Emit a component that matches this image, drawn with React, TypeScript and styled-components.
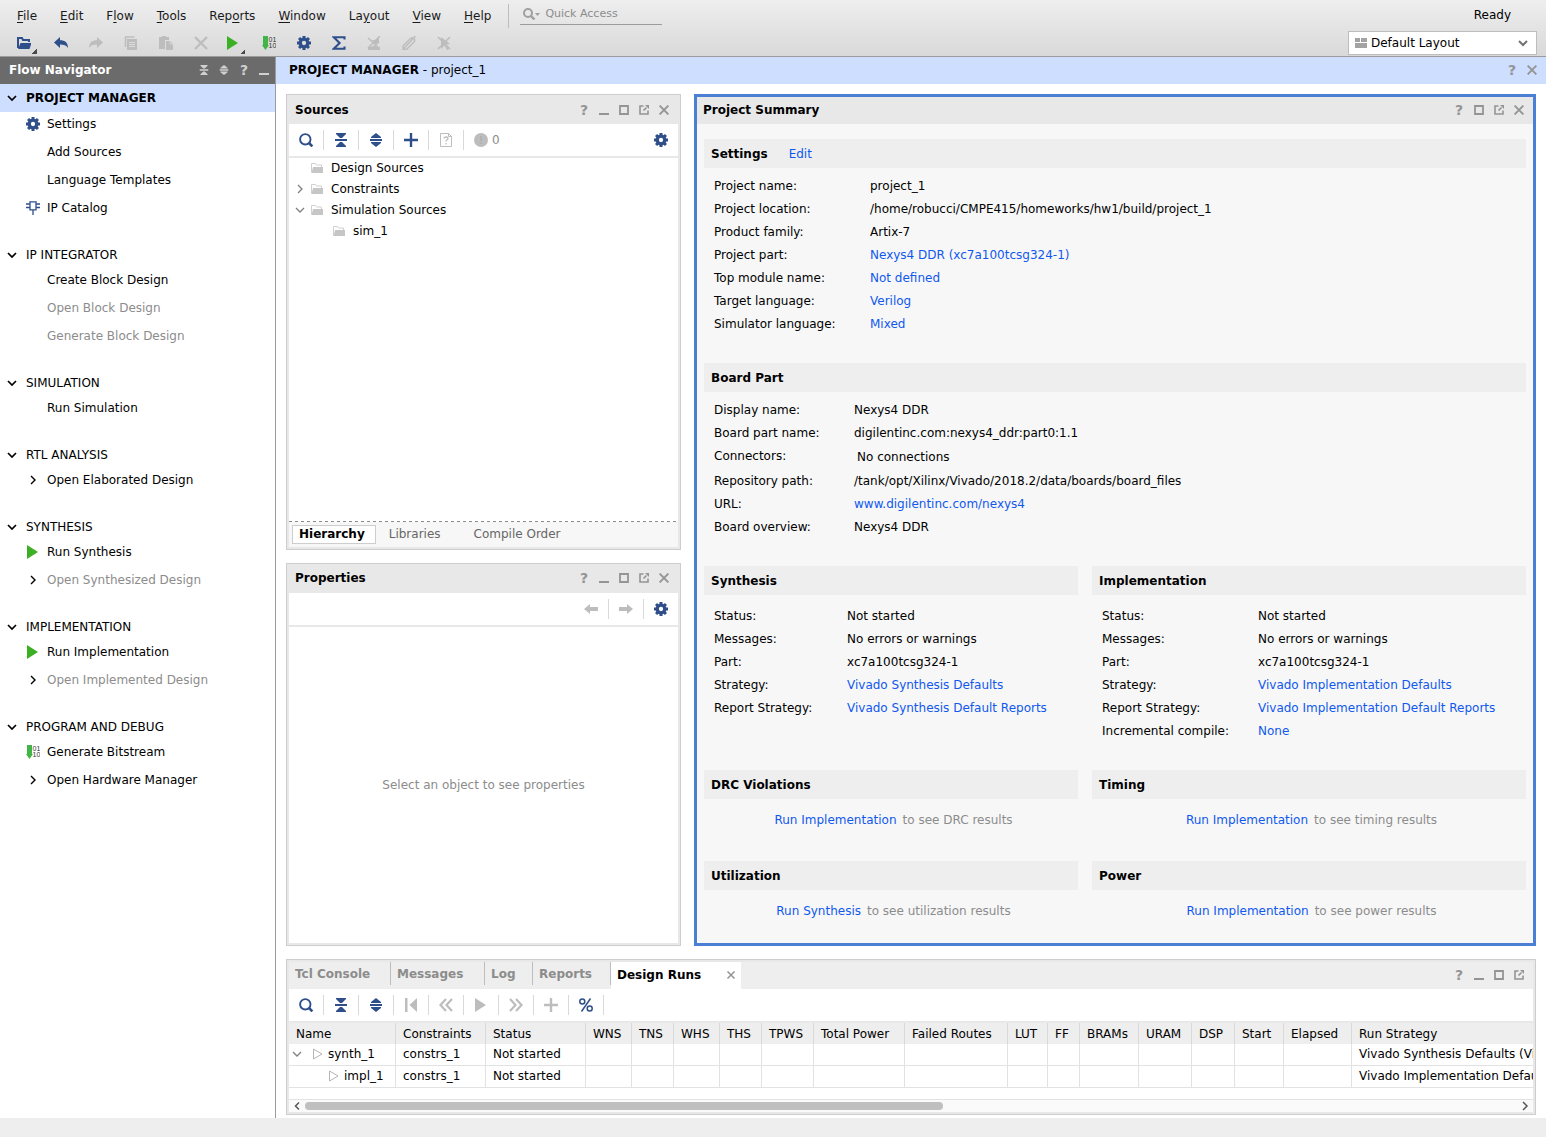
import React from "react";
import styled, { createGlobalStyle, css } from "styled-components";

const navy = "#2f4f8a";
const dim = "#bdbdbd";
const grey = "#949494";
const green = "#3bb024";

const GlobalStyle = createGlobalStyle`
  * { box-sizing: border-box; }
  body {
    margin: 0;
    background: #fff;
    color: #000;
    font-family: "DejaVu Sans", Verdana, sans-serif;
    font-size: 12px;
    line-height: 16px;
  }
  button, input, select {
    font: inherit;
    color: inherit;
    margin: 0;
    padding: 0;
    border: 0;
    border-radius: 0;
    background: none;
  }
  h1, h2, h3, p, ul, dl, dd, dt { margin: 0; padding: 0; font: inherit; }
  ul { list-style: none; }
  svg { display: block; flex: none; }
`;

/* ---------- icons ---------- */

type IconProps = { color?: string; size?: number };

const Svg = ({ size = 14, box = 14, children }: { size?: number; box?: number; children: React.ReactNode }) => (
  <svg width={size} height={size} viewBox={`0 0 ${box} ${box}`} fill="none" aria-hidden="true">
    {children}
  </svg>
);

const GearIcon = ({ color = navy }: IconProps) => (
  <Svg>
    {[0, 45, 90, 135, 180, 225, 270, 315].map((a) => (
      <rect key={a} x="5.5" y="0" width="3" height="3" fill={color} transform={`rotate(${a} 7 7)`} />
    ))}
    <circle cx="7" cy="7" r="3.8" stroke={color} strokeWidth="3.3" />
  </Svg>
);

const SearchIcon = ({ color = navy }: IconProps) => (
  <Svg>
    <circle cx="6.3" cy="6.3" r="5.2" stroke={color} strokeWidth="1.9" />
    <path d="M10 10l3.4 3.4" stroke={color} strokeWidth="2.6" />
  </Svg>
);

const CollapseIcon = ({ color = navy, size }: IconProps) => (
  <Svg size={size}>
    <path d="M2 0h10v1L8 5H6L2 1zM1 6h12v2H1zM6 9h2l4 4v1H2v-1z" fill={color} />
  </Svg>
);

const ExpandIcon = ({ color = navy, size }: IconProps) => (
  <Svg size={size}>
    <path d="M7 0l5 4v1H2V4zM1 6h12v2H1zM2 9h10v1l-5 4-5-4z" fill={color} />
  </Svg>
);

const PlusIcon = ({ color = navy }: IconProps) => (
  <Svg>
    <path d="M7 0v14M0 7h14" stroke={color} strokeWidth="2.4" />
  </Svg>
);

const UnknownFileIcon = () => (
  <Svg>
    <path d="M1.5.5h8l3 3v10h-11z" stroke={dim} />
    <path d="M9.500.5v3h3" stroke={dim} />
    <path d="M5 5.500c0-2 4-2 4 0 0 1.300-2 1.200-2 3M7 10v1.500" stroke={dim} strokeWidth="1.300" />
  </Svg>
);

const AlertIcon = () => (
  <Svg>
    <circle cx="7" cy="7" r="7" fill={dim} />
    <path d="M7 3v5M7 9.500v1.500" stroke="#b0b0b0" strokeWidth="1.600" />
  </Svg>
);

const FolderIcon = () => (
  <Svg size={12} box={12}>
    <path d="M.5 10.500V1.500h4l1 1.500h5v2" stroke="#d0d0d0" />
    <path d="M2 5h10v6H.500z" fill="#c6c6c6" />
  </Svg>
);

const OpenIcon = () => (
  <Svg>
    <path d="M1 12V2h4l1 2h6v2" stroke={navy} strokeWidth="2" />
    <path d="M3.500 7H14.500L12.500 13H1z" fill={navy} />
  </Svg>
);

const UndoIcon = ({ color = navy, flip }: IconProps & { flip?: boolean }) => (
  <Svg>
    <path
      d="M6 1v3.200c5 0 8 2.300 8 7.800-1.800-2.800-4-3.600-8-3.600V12L0 6.500z"
      fill={color}
      transform={flip ? "matrix(-1 0 0 1 14 0)" : undefined}
    />
  </Svg>
);

const CopyIcon = () => (
  <Svg>
    <path d="M1.500 11V1h9" stroke={dim} strokeWidth="1.500" />
    <path d="M3 3h10v11H3z" fill={dim} />
    <path d="M5 6.500h6M5 8.500h6M5 10.500h6" stroke="#dcdcdc" />
  </Svg>
);

const PasteIcon = () => (
  <Svg>
    <path d="M0 1h3V0h4v1h3v3H6v9H0z" fill={dim} />
    <path d="M7 5h4l3 3v6H7z" fill={dim} />
    <path d="M11 5v3h3" stroke="#dcdcdc" strokeWidth=".8" />
  </Svg>
);

const DeleteIcon = () => (
  <Svg>
    <path d="M1 1l12 12M13 1L1 13" stroke={dim} strokeWidth="2.300" />
  </Svg>
);

const PlayIcon = ({ color = green }: IconProps) => (
  <Svg>
    <path d="M1 0l11 7-11 7z" fill={color} />
  </Svg>
);

const BitsIcon = () => (
  <Svg>
    <path d="M1 0h5v9h1L3.500 14 0 9h1z" fill="#42b549" />
    <text x="6.500" y="5.500" fontSize="7" fontFamily="Liberation Sans" fill="#333">01</text>
    <text x="6.500" y="12" fontSize="7" fontFamily="Liberation Sans" fill="#333">10</text>
  </Svg>
);

const SigmaIcon = () => (
  <Svg>
    <path d="M12.500 3.500V1.200H1.800L7.600 7l-5.800 5.800h10.700v-2.300" stroke={navy} strokeWidth="2.100" />
  </Svg>
);

const ClearMarkIcon = () => (
  <Svg>
    <path d="M1 14h12v-3H9.500L8 9l-4 2H1z" fill={dim} />
    <path d="M1 2l10 9M13 0L1 12" stroke={dim} strokeWidth="1.500" />
    <path d="M5 4h3l4-3v6L9 9z" fill={dim} />
  </Svg>
);

const LinkOffIcon = () => (
  <Svg>
    <path
      d="M1.500 9.500l7-7c2.500-2 5.500 1 3.500 3.500l-7 7c-2.500 1.500-5-1-3.500-3.500zM4 10l6-6M13.500 0L.5 14"
      stroke={dim}
      strokeWidth="1.500"
    />
  </Svg>
);

const CursorOffIcon = () => (
  <Svg>
    <path d="M4 1l9 7-4 .5 3 4.500-2 1L7.500 9.500 4 13z" fill={dim} />
    <path d="M1 1l12 12M13 1L1 13" stroke={dim} strokeWidth="1.500" />
  </Svg>
);

const ChipIcon = () => (
  <Svg>
    <path d="M4 .8h6v8H4zM0 3h4M0 6.500h4M10 3h4M10 6.500h4M7 9v5" stroke={navy} strokeWidth="1.300" />
  </Svg>
);

const PreviousIcon = ({ flip }: { flip?: boolean }) => (
  <Svg>
    <path
      d="M0 7l6-5v3h8v4H6v3z"
      fill={dim}
      transform={flip ? "matrix(-1 0 0 1 14 0)" : undefined}
    />
  </Svg>
);

const FirstIcon = () => (
  <Svg>
    <path d="M1 0h2.500v14H1zM13 0v14L5.500 7z" fill={dim} />
  </Svg>
);

const RewindIcon = ({ flip }: { flip?: boolean }) => (
  <Svg>
    <path
      d="M7 1L1.500 7 7 13M13 1L7.500 7l5.500 6"
      stroke={dim}
      strokeWidth="2.200"
      transform={flip ? "matrix(-1 0 0 1 14 0)" : undefined}
    />
  </Svg>
);

const PercentIcon = () => (
  <Svg>
    <circle cx="3.300" cy="3.500" r="2.500" stroke={navy} strokeWidth="1.500" />
    <circle cx="10.700" cy="10.500" r="2.500" stroke={navy} strokeWidth="1.500" />
    <path d="M11.500.5l-9 13" stroke={navy} strokeWidth="1.500" />
  </Svg>
);

const MinimizeIcon = ({ color = grey }: IconProps) => (
  <Svg size={10} box={10}>
    <path d="M0 8h10v2H0z" fill={color} />
  </Svg>
);

const MaximizeIcon = () => (
  <Svg size={10} box={10}>
    <path d="M1 1h8v8H1z" stroke={grey} strokeWidth="1.800" />
  </Svg>
);

const FloatIcon = () => (
  <Svg size={10} box={10}>
    <path d="M4.500 1H1v8h8V5.500M4.500 5.500L7.500 2.500" stroke={grey} strokeWidth="1.600" />
    <path d="M6 0H10v4z" fill={grey} />
  </Svg>
);

const CloseIcon = ({ size = 10 }: IconProps) => (
  <Svg size={size} box={10}>
    <path d="M.6.6l8.800 8.800M9.400.6L.6 9.400" stroke={grey} strokeWidth="1.900" />
  </Svg>
);

const Chevron = ({ color = "#000", dir = "down", weight = 1.7 }: { color?: string; dir?: "down" | "right" | "left"; weight?: number }) => (
  <Svg size={10} box={10}>
    <path
      d={dir === "down" ? "M1 3l4 4 4-4" : dir === "right" ? "M3 1l4 4-4 4" : "M7 1.500L3.500 5 7 8.500"}
      stroke={color}
      strokeWidth={weight}
    />
  </Svg>
);

const RunStateIcon = () => (
  <Svg size={12} box={12}>
    <path d="M1.500 1l8.500 5-8.500 5z" stroke="#b5b5b5" />
  </Svg>
);

const LayoutIcon = () => (
  <Svg size={12} box={12}>
    <path d="M0 1h5v4H0zM6 1h6v4H6zM0 6h12v5H0z" fill="#a3a3a3" />
  </Svg>
);

/* ---------- frame ---------- */

const Shell = styled.div`
  display: flex;
  flex-direction: column;
  min-height: 100vh;
`;

const TopBar = styled.header`
  display: flex;
  justify-content: space-between;
  height: 57px;
  padding-right: 9px;
  border-bottom: 1px solid #9b9b9b;
  background: linear-gradient(#eeeeee, #d9d9d9);
`;

const TopRow = styled.div`
  display: flex;
  align-items: center;
  height: 31px;
`;

const MenuBar = styled.nav`
  display: flex;
  align-items: center;
  gap: 23px;
  height: 24px;
  padding: 0 17px;
  border-right: 1px solid #bdbdbd;
  color: #1a1a1a;
  u { text-underline-offset: 2px; }
`;

const QuickAccess = styled.label`
  display: flex;
  align-items: center;
  align-self: flex-start;
  width: 142px;
  height: 25px;
  margin-left: 11px;
  padding: 3px 0 0 3px;
  border-bottom: 1px solid #9b9b9b;
  input {
    flex: 1;
    min-width: 0;
    margin-left: 5px;
    font-size: 11px;
    outline: 0;
  }
  input::placeholder { color: #8c8c8c; opacity: 1; }
`;

const MainTools = styled.div`
  display: flex;
  height: 25px;
  padding-left: 8px;
`;

const MainTool = styled.button<{ $narrow?: boolean; $menu?: boolean }>`
  position: relative;
  display: flex;
  align-items: center;
  justify-content: center;
  width: ${(p) => (p.$narrow ? 33 : 35)}px;
  padding: 0 ${(p) => (p.$menu ? 3 : 0)}px 2px 0;
`;

const MenuCorner = styled.span`
  position: absolute;
  right: 6px;
  bottom: 2px;
  width: 5px;
  height: 5px;
  background: linear-gradient(135deg, transparent 50%, #4a4a4a 50%);
`;

const TopRight = styled.div`
  display: flex;
  flex-direction: column;
  align-items: flex-end;
`;

const Ready = styled.output`
  padding: 0 26px 2px 0;
`;

const LayoutPicker = styled.label`
  position: relative;
  display: flex;
  align-items: center;
  width: 189px;
  height: 24px;
  border: 1px solid #bdbdbd;
  background: #fff;
  select {
    appearance: none;
    width: 100%;
    height: 100%;
    padding: 0 24px 0 22px;
    outline: 0;
  }
  svg { position: absolute; pointer-events: none; }
  svg:first-child { left: 6px; }
  svg:last-child { right: 8px; }
`;

const Body = styled.div`
  display: flex;
  flex: 1;
`;

const StatusBar = styled.footer`
  height: 19px;
  background: #eeeeee;
`;

/* ---------- flow navigator ---------- */

const Sidebar = styled.aside`
  flex: none;
  width: 276px;
  border-right: 1px solid #9b9b9b;
`;

const SideHeader = styled.div`
  display: flex;
  align-items: center;
  justify-content: space-between;
  height: 27px;
  padding: 0 1px 2px 9px;
  background: #6b6b6b;
  color: #fff;
  h2 { font-weight: bold; }
`;

const Section = styled.section`
  margin-bottom: 22px;
`;

const SectionHead = styled.button<{ $active?: boolean }>`
  display: flex;
  align-items: center;
  gap: 9px;
  width: 100%;
  height: ${(p) => (p.$active ? 28 : 26)}px;
  padding-left: 7px;
  ${(p) =>
    p.$active &&
    css`
      background: #cddeff;
      font-weight: bold;
    `}
`;

const SectionList = styled.ul`
  display: grid;
  gap: 4px;
`;

const NavItem = styled.button`
  display: grid;
  grid-template-columns: 14px auto;
  gap: 7px;
  align-items: center;
  height: 24px;
  padding-left: 26px;
  &:disabled { color: #8c8c8c; }
`;

const NavIcon = styled.span`
  display: flex;
  justify-content: center;
`;

/* ---------- work area ---------- */

const Main = styled.main`
  display: flex;
  flex: 1;
  flex-direction: column;
  min-width: 0;
`;

const MainHeader = styled.div`
  display: flex;
  align-items: center;
  justify-content: space-between;
  height: 27px;
  padding: 0 4px 2px 13px;
  background: #cddeff;
`;

const Workspace = styled.div`
  display: grid;
  flex: 1;
  grid-template-columns: 395px minmax(0, 1fr);
  grid-template-rows: 1fr auto;
  gap: 13px;
  padding: 10px 10px 3px;
`;

const LeftColumn = styled.div`
  display: grid;
  grid-template-rows: 455fr 383fr;
  gap: 13px;
`;

const Panel = styled.section<{ $active?: boolean; $wide?: boolean }>`
  display: flex;
  flex-direction: column;
  min-width: 0;
  ${(p) =>
    p.$active
      ? css`
          border: 3px solid #4a7fd3;
          background: #f7f7f7;
        `
      : css`
          border: 1px solid #cdcdcd;
          padding: 2px;
          background: #e8e8e8;
        `}
  ${(p) => p.$wide && "grid-column: 1 / -1;"}
`;

const PanelHeader = styled.div`
  display: flex;
  align-items: center;
  justify-content: space-between;
  height: 27px;
  padding: 0 4px 2px 6px;
  background: #e8e8e8;
  h2 { font-weight: bold; }
`;

const WindowTools = styled.div`
  display: flex;
`;

const WindowTool = styled.button<{ $light?: boolean }>`
  display: flex;
  align-items: center;
  justify-content: center;
  width: 20px;
  height: 20px;
  color: ${(p) => (p.$light ? "#d0d0d0" : grey)};
  font-size: 14px;
  font-weight: bold;
`;

const PanelTools = styled.div`
  display: flex;
  align-items: center;
  height: 34px;
  border-bottom: 2px solid #e8e8e8;
  background: #fff;
`;

const PanelTool = styled.button<{ $plain?: boolean }>`
  display: flex;
  align-items: center;
  justify-content: center;
  width: ${(p) => (p.$plain ? 34 : 35)}px;
  height: 20px;
  border-right: ${(p) => (p.$plain ? 0 : 1)}px solid #d9d9d9;
`;

const Spacer = styled.span`
  flex: 1;
`;

const ErrorCount = styled.span`
  display: flex;
  align-items: center;
  gap: 4px;
  padding-left: 10px;
  color: #8c8c8c;
`;

const PanelBody = styled.div`
  flex: 1;
  background: #fff;
`;

const TreeItem = styled.li<{ $depth: number }>`
  display: grid;
  grid-template-columns: 22px 12px auto;
  align-items: center;
  height: 21px;
  padding: 0 0 2px ${(p) => p.$depth * 22}px;
  button { display: flex; justify-content: center; }
  svg { grid-row: 1; }
  span { grid-column: 3; padding-left: 8px; }
  > svg { grid-column: 2; }
`;

const DashedRule = styled.div`
  height: 1px;
  background: repeating-linear-gradient(90deg, #8c8c8c 0 3px, #fff 3px 6px);
`;

const ViewTabs = styled.div`
  display: flex;
  align-items: center;
  height: 25px;
  padding-left: 3px;
  background: #f7f7f7;
`;

const ViewTab = styled.button<{ $active?: boolean }>`
  height: 19px;
  color: #666;
  padding: 0 20px 0 13px;
  ${(p) =>
    p.$active &&
    css`
      padding: 0 10px 0 6px;
      border: 1px solid #cdcdcd;
      background: #fff;
      color: #000;
      font-weight: bold;
    `}
`;

const EmptyBody = styled(PanelBody)`
  display: flex;
  align-items: center;
  justify-content: center;
  color: #8c8c8c;
`;

/* ---------- project summary ---------- */

const Summary = styled.div`
  display: grid;
  grid-template-columns: 374fr 434fr;
  gap: 27px 14px;
  align-content: start;
  padding: 15px 7px 0;
`;

const Card = styled.section<{ $span?: boolean }>`
  ${(p) => p.$span && "grid-column: 1 / -1;"}
`;

const CardTitle = styled.div`
  display: flex;
  align-items: center;
  gap: 21px;
  height: 29px;
  padding-left: 7px;
  background: #eeeeee;
  h3 { font-weight: bold; }
`;

const Link = styled.a`
  color: #1058ee;
  text-decoration: none;
`;

const Facts = styled.dl<{ $label: number; $top?: number }>`
  display: grid;
  grid-template-columns: ${(p) => p.$label}px minmax(0, 1fr);
  padding: ${(p) => p.$top ?? 7}px 0 0 10px;
  line-height: 23px;
`;

const Inset = styled.dd`
  padding: 1px 0 1px 3px;
`;

const Hint = styled.p`
  display: flex;
  justify-content: center;
  gap: 6px;
  padding: 10px 0 2px 5px;
  color: #8c8c8c;
  line-height: 23px;
`;

/* ---------- design runs ---------- */

const RunsHeader = styled(PanelHeader)`
  align-items: stretch;
  padding: 0 4px 0 0;
  background: #eeeeee;
`;

const RunsTabs = styled.div`
  display: flex;
`;

const RunsTab = styled.button<{ $width: number }>`
  align-self: flex-start;
  width: ${(p) => p.$width}px;
  height: 23px;
  padding: 1px 0 0 6px;
  border-right: 1px solid #bdbdbd;
  color: #8c8c8c;
  font-weight: bold;
  text-align: left;
`;

const ActiveTab = styled.div`
  display: flex;
  align-items: center;
  justify-content: space-between;
  width: 130px;
  padding: 0 6px 2px;
  background: #fff;
  button { font-weight: bold; }
`;

const RunsWindowTools = styled(WindowTools)`
  align-items: center;
  padding-bottom: 2px;
`;

const TableClip = styled.div`
  overflow: hidden;
  height: 76px;
  background: #fff;
`;

const RunsTable = styled.table`
  width: 1400px;
  border-collapse: separate;
  border-spacing: 0;
  table-layout: fixed;
  th, td {
    height: 22px;
    padding: 0 0 0 7px;
    border-right: 1px solid #e2e2e2;
    border-bottom: 1px solid #e2e2e2;
    line-height: 20px;
    text-align: left;
    vertical-align: top;
    white-space: nowrap;
    font-weight: normal;
  }
  th {
    height: 21px;
    border-bottom: 0;
    border-right-color: #d9d9d9;
    background: #eeeeee;
    vertical-align: middle;
  }
`;

const RunName = styled.div<{ $child?: boolean }>`
  display: flex;
  align-items: center;
  gap: 4px;
  padding-left: ${(p) => (p.$child ? 32 : 0)}px;
  button { display: flex; margin: 0 6px 0 -4px; }
`;

const ScrollBar = styled.div`
  display: flex;
  align-items: center;
  height: 13px;
  border-top: 1px solid #e2e2e2;
  background: #fafafa;
`;

const ScrollArrow = styled.button`
  display: flex;
  align-items: center;
  justify-content: center;
  width: 16px;
`;

const ScrollTrack = styled.div`
  display: flex;
  flex: 1;
  &::after { content: ""; flex: 573; }
`;

const ScrollThumb = styled.div`
  flex: 636;
  height: 8px;
  border-radius: 4px;
  background: #bfbfbf;
`;

/* ---------- data ---------- */

const menus: [string, string, string][] = [
  ["", "F", "ile"],
  ["", "E", "dit"],
  ["F", "l", "ow"],
  ["", "T", "ools"],
  ["Rep", "o", "rts"],
  ["", "W", "indow"],
  ["La", "y", "out"],
  ["", "V", "iew"],
  ["", "H", "elp"],
];

const mainTools: { name: string; icon: React.ReactNode; menu?: boolean; narrow?: boolean }[] = [
  { name: "Open", icon: <OpenIcon />, menu: true },
  { name: "Undo", icon: <UndoIcon /> },
  { name: "Redo", icon: <UndoIcon color={dim} flip /> },
  { name: "Copy", icon: <CopyIcon /> },
  { name: "Paste", icon: <PasteIcon /> },
  { name: "Delete", icon: <DeleteIcon /> },
  { name: "Run", icon: <PlayIcon />, menu: true, narrow: true },
  { name: "Generate Bitstream", icon: <BitsIcon /> },
  { name: "Settings", icon: <GearIcon /> },
  { name: "Report", icon: <SigmaIcon /> },
  { name: "Clear marks", icon: <ClearMarkIcon /> },
  { name: "Unlink", icon: <LinkOffIcon /> },
  { name: "Unselect", icon: <CursorOffIcon /> },
];

type Item = { label: string; icon?: React.ReactNode; off?: boolean };
const arrow = <Chevron dir="right" weight={1.4} />;

const sections: { title: string; active?: boolean; items: Item[] }[] = [
  {
    title: "PROJECT MANAGER",
    active: true,
    items: [
      { label: "Settings", icon: <GearIcon /> },
      { label: "Add Sources" },
      { label: "Language Templates" },
      { label: "IP Catalog", icon: <ChipIcon /> },
    ],
  },
  {
    title: "IP INTEGRATOR",
    items: [
      { label: "Create Block Design" },
      { label: "Open Block Design", off: true },
      { label: "Generate Block Design", off: true },
    ],
  },
  { title: "SIMULATION", items: [{ label: "Run Simulation" }] },
  { title: "RTL ANALYSIS", items: [{ label: "Open Elaborated Design", icon: arrow }] },
  {
    title: "SYNTHESIS",
    items: [
      { label: "Run Synthesis", icon: <PlayIcon /> },
      { label: "Open Synthesized Design", icon: arrow, off: true },
    ],
  },
  {
    title: "IMPLEMENTATION",
    items: [
      { label: "Run Implementation", icon: <PlayIcon /> },
      { label: "Open Implemented Design", icon: arrow, off: true },
    ],
  },
  {
    title: "PROGRAM AND DEBUG",
    items: [
      { label: "Generate Bitstream", icon: <BitsIcon /> },
      { label: "Open Hardware Manager", icon: arrow },
    ],
  },
];

const sources: { label: string; depth: number; dir?: "down" | "right" }[] = [
  { label: "Design Sources", depth: 0 },
  { label: "Constraints", depth: 0, dir: "right" },
  { label: "Simulation Sources", depth: 0, dir: "down" },
  { label: "sim_1", depth: 1 },
];

type Fact = { label: string; value: string; link?: boolean; inset?: boolean };
const f = (label: string, value: string, link?: boolean): Fact => ({ label, value, link });

const settings = [
  f("Project name:", "project_1"),
  f("Project location:", "/home/robucci/CMPE415/homeworks/hw1/build/project_1"),
  f("Product family:", "Artix-7"),
  f("Project part:", "Nexys4 DDR (xc7a100tcsg324-1)", true),
  f("Top module name:", "Not defined", true),
  f("Target language:", "Verilog", true),
  f("Simulator language:", "Mixed", true),
];

const board: Fact[] = [
  f("Display name:", "Nexys4 DDR"),
  f("Board part name:", "digilentinc.com:nexys4_ddr:part0:1.1"),
  { label: "Connectors:", value: "No connections", inset: true },
  f("Repository path:", "/tank/opt/Xilinx/Vivado/2018.2/data/boards/board_files"),
  f("URL:", "www.digilentinc.com/nexys4", true),
  f("Board overview:", "Nexys4 DDR"),
];

const synthesis = [
  f("Status:", "Not started"),
  f("Messages:", "No errors or warnings"),
  f("Part:", "xc7a100tcsg324-1"),
  f("Strategy:", "Vivado Synthesis Defaults", true),
  f("Report Strategy:", "Vivado Synthesis Default Reports", true),
];

const implementation = [
  f("Status:", "Not started"),
  f("Messages:", "No errors or warnings"),
  f("Part:", "xc7a100tcsg324-1"),
  f("Strategy:", "Vivado Implementation Defaults", true),
  f("Report Strategy:", "Vivado Implementation Default Reports", true),
  f("Incremental compile:", "None", true),
];

const hints = [
  { title: "DRC Violations", link: "Run Implementation", rest: "to see DRC results" },
  { title: "Timing", link: "Run Implementation", rest: "to see timing results" },
  { title: "Utilization", link: "Run Synthesis", rest: "to see utilization results" },
  { title: "Power", link: "Run Implementation", rest: "to see power results" },
];

const runsTabs: [string, number][] = [
  ["Tcl Console", 102],
  ["Messages", 94],
  ["Log", 48],
  ["Reports", 78],
];

const columns: [string, number?][] = [
  ["Name", 107], ["Constraints", 90], ["Status", 100], ["WNS", 46], ["TNS", 42], ["WHS", 46],
  ["THS", 42], ["TPWS", 52], ["Total Power", 91], ["Failed Routes", 103], ["LUT", 40], ["FF", 32],
  ["BRAMs", 59], ["URAM", 53], ["DSP", 43], ["Start", 49], ["Elapsed", 68], ["Run Strategy"],
];

const runs = [
  { name: "synth_1", strategy: "Vivado Synthesis Defaults (Vivado Synthesis 2018)" },
  { name: "impl_1", child: true, strategy: "Vivado Implementation Defaults" },
];

const runTools: [string, React.ReactNode][] = [
  ["Search", <SearchIcon />],
  ["Collapse all", <CollapseIcon />],
  ["Expand all", <ExpandIcon />],
  ["First", <FirstIcon />],
  ["Previous", <RewindIcon />],
  ["Launch", <PlayIcon color={dim} />],
  ["Next", <RewindIcon flip />],
  ["Create runs", <PlusIcon color={dim} />],
  ["Show percentage", <PercentIcon />],
];

/* ---------- parts ---------- */

const windowIcons = {
  min: ["Minimize", <MinimizeIcon />],
  max: ["Maximize", <MaximizeIcon />],
  float: ["Float", <FloatIcon />],
  close: ["Close", <CloseIcon />],
} as const;

const WindowButtons = ({ kinds }: { kinds: (keyof typeof windowIcons)[] }) => (
  <>
    <WindowTool aria-label="Help">?</WindowTool>
    {kinds.map((k) => (
      <WindowTool key={k} aria-label={windowIcons[k][0]}>{windowIcons[k][1]}</WindowTool>
    ))}
  </>
);

const FactList = ({ rows, label, top }: { rows: Fact[]; label: number; top?: number }) => (
  <Facts $label={label} $top={top}>
    {rows.map((r) => {
      const Value = r.inset ? Inset : "dd";
      return (
        <React.Fragment key={r.label}>
          <dt>{r.label}</dt>
          <Value>{r.link ? <Link href="#">{r.value}</Link> : r.value}</Value>
        </React.Fragment>
      );
    })}
  </Facts>
);

export default function App() {
  return (
    <Shell>
      <GlobalStyle />
      <TopBar>
        <div>
          <TopRow>
            <MenuBar>
              {menus.map(([a, b, c]) => (
                <button key={a + b + c}>{a}<u>{b}</u>{c}</button>
              ))}
            </MenuBar>
            <QuickAccess>
              <svg width="17" height="12" viewBox="0 0 17 12" fill="none" aria-hidden="true">
                <circle cx="5" cy="5" r="4" stroke="#a0a0a0" strokeWidth="2" />
                <path d="M8 8l3.500 3.500" stroke="#a0a0a0" strokeWidth="2.400" />
                <path d="M12 5h5l-2.500 3z" fill="#a0a0a0" />
              </svg>
              <input type="text" aria-label="Quick Access" placeholder="Quick Access" />
            </QuickAccess>
          </TopRow>
          <MainTools>
            {mainTools.map((t) => (
              <MainTool key={t.name} aria-label={t.name} $narrow={t.narrow} $menu={t.menu}>
                {t.icon}
                {t.menu && <MenuCorner />}
              </MainTool>
            ))}
          </MainTools>
        </div>
        <TopRight>
          <TopRow><Ready>Ready</Ready></TopRow>
          <LayoutPicker>
            <LayoutIcon />
            <select aria-label="Layout"><option>Default Layout</option></select>
            <Chevron color="#737373" weight={2} />
          </LayoutPicker>
        </TopRight>
      </TopBar>

      <Body>
        <Sidebar>
          <SideHeader>
            <h2>Flow Navigator</h2>
            <WindowTools>
              <WindowTool $light aria-label="Collapse all"><CollapseIcon color="#d0d0d0" size={10} /></WindowTool>
              <WindowTool $light aria-label="Expand all"><ExpandIcon color="#d0d0d0" size={10} /></WindowTool>
              <WindowTool $light aria-label="Help">?</WindowTool>
              <WindowTool $light aria-label="Minimize"><MinimizeIcon color="#d0d0d0" /></WindowTool>
            </WindowTools>
          </SideHeader>
          {sections.map((s) => (
            <Section key={s.title}>
              <SectionHead $active={s.active}>
                <Chevron />
                {s.title}
              </SectionHead>
              <SectionList>
                {s.items.map((i) => (
                  <li key={i.label}>
                    <NavItem disabled={i.off}>
                      <NavIcon>{i.icon}</NavIcon>
                      {i.label}
                    </NavItem>
                  </li>
                ))}
              </SectionList>
            </Section>
          ))}
        </Sidebar>

        <Main>
          <MainHeader>
            <h1><b>PROJECT MANAGER</b> - project_1</h1>
            <WindowTools><WindowButtons kinds={["close"]} /></WindowTools>
          </MainHeader>
          <Workspace>
            <LeftColumn>
              <Panel>
                <PanelHeader>
                  <h2>Sources</h2>
                  <WindowTools><WindowButtons kinds={["min", "max", "float", "close"]} /></WindowTools>
                </PanelHeader>
                <PanelTools>
                  <PanelTool aria-label="Search"><SearchIcon /></PanelTool>
                  <PanelTool aria-label="Collapse all"><CollapseIcon /></PanelTool>
                  <PanelTool aria-label="Expand all"><ExpandIcon /></PanelTool>
                  <PanelTool aria-label="Add sources"><PlusIcon /></PanelTool>
                  <PanelTool aria-label="Missing files"><UnknownFileIcon /></PanelTool>
                  <ErrorCount><AlertIcon />0</ErrorCount>
                  <Spacer />
                  <PanelTool $plain aria-label="Sources settings"><GearIcon /></PanelTool>
                </PanelTools>
                <PanelBody>
                  <ul>
                    {sources.map((s) => (
                      <TreeItem key={s.label} $depth={s.depth}>
                        {s.dir && (
                          <button aria-label={`Toggle ${s.label}`}>
                            <Chevron color="#808080" dir={s.dir} weight={1.3} />
                          </button>
                        )}
                        <FolderIcon />
                        <span>{s.label}</span>
                      </TreeItem>
                    ))}
                  </ul>
                </PanelBody>
                <DashedRule />
                <ViewTabs role="tablist">
                  <ViewTab role="tab" aria-selected $active>Hierarchy</ViewTab>
                  <ViewTab role="tab">Libraries</ViewTab>
                  <ViewTab role="tab">Compile Order</ViewTab>
                </ViewTabs>
              </Panel>

              <Panel>
                <PanelHeader>
                  <h2>Properties</h2>
                  <WindowTools><WindowButtons kinds={["min", "max", "float", "close"]} /></WindowTools>
                </PanelHeader>
                <PanelTools>
                  <Spacer />
                  <PanelTool aria-label="Back"><PreviousIcon /></PanelTool>
                  <PanelTool aria-label="Forward"><PreviousIcon flip /></PanelTool>
                  <PanelTool $plain aria-label="Properties settings"><GearIcon /></PanelTool>
                </PanelTools>
                <EmptyBody>Select an object to see properties</EmptyBody>
              </Panel>
            </LeftColumn>

            <Panel $active>
              <PanelHeader>
                <h2>Project Summary</h2>
                <WindowTools><WindowButtons kinds={["max", "float", "close"]} /></WindowTools>
              </PanelHeader>
              <Summary>
                <Card $span>
                  <CardTitle><h3>Settings</h3><Link href="#">Edit</Link></CardTitle>
                  <FactList rows={settings} label={156} />
                </Card>
                <Card $span>
                  <CardTitle><h3>Board Part</h3></CardTitle>
                  <FactList rows={board} label={140} />
                </Card>
                <Card>
                  <CardTitle><h3>Synthesis</h3></CardTitle>
                  <FactList rows={synthesis} label={133} top={10} />
                </Card>
                <Card>
                  <CardTitle><h3>Implementation</h3></CardTitle>
                  <FactList rows={implementation} label={156} top={10} />
                </Card>
                {hints.map((h) => (
                  <Card key={h.title}>
                    <CardTitle><h3>{h.title}</h3></CardTitle>
                    <Hint><Link href="#">{h.link}</Link><span>{h.rest}</span></Hint>
                  </Card>
                ))}
              </Summary>
            </Panel>

            <Panel $wide>
              <RunsHeader>
                <RunsTabs role="tablist">
                  {runsTabs.map(([name, width]) => (
                    <RunsTab role="tab" key={name} $width={width}>{name}</RunsTab>
                  ))}
                  <ActiveTab>
                    <button role="tab" aria-selected>Design Runs</button>
                    <button aria-label="Close Design Runs"><CloseIcon size={8} /></button>
                  </ActiveTab>
                </RunsTabs>
                <RunsWindowTools><WindowButtons kinds={["min", "max", "float"]} /></RunsWindowTools>
              </RunsHeader>
              <PanelTools>
                {runTools.map(([name, icon]) => (
                  <PanelTool key={name} aria-label={name}>{icon}</PanelTool>
                ))}
              </PanelTools>
              <TableClip>
                <RunsTable>
                  <colgroup>
                    {columns.map(([name, width]) => <col key={name} style={{ width }} />)}
                  </colgroup>
                  <thead>
                    <tr>{columns.map(([name]) => <th key={name} scope="col">{name}</th>)}</tr>
                  </thead>
                  <tbody>
                    {runs.map((r) => (
                      <tr key={r.name}>
                        <td>
                          <RunName $child={r.child}>
                            {!r.child && (
                              <button aria-label="Toggle synth_1">
                                <Chevron color="#808080" weight={1.3} />
                              </button>
                            )}
                            <RunStateIcon />
                            {r.name}
                          </RunName>
                        </td>
                        <td>constrs_1</td>
                        <td>Not started</td>
                        {columns.slice(3, -1).map(([name]) => <td key={name} />)}
                        <td>{r.strategy}</td>
                      </tr>
                    ))}
                  </tbody>
                </RunsTable>
              </TableClip>
              <ScrollBar>
                <ScrollArrow aria-label="Scroll left"><Chevron dir="left" color="#555" weight={1.5} /></ScrollArrow>
                <ScrollTrack><ScrollThumb /></ScrollTrack>
                <ScrollArrow aria-label="Scroll right"><Chevron dir="right" color="#555" weight={1.5} /></ScrollArrow>
              </ScrollBar>
            </Panel>
          </Workspace>
        </Main>
      </Body>
      <StatusBar />
    </Shell>
  );
}
